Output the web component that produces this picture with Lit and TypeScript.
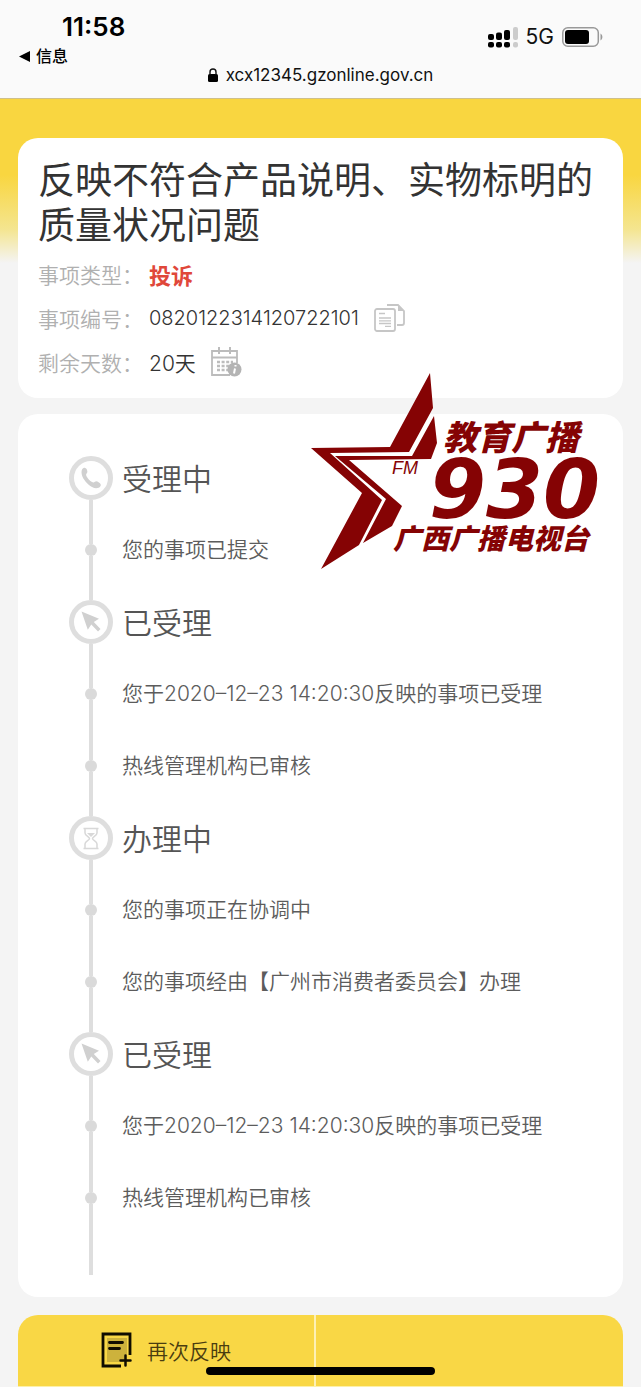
import { LitElement, html, svg, css } from "lit";
import { customElement, property } from "lit/decorators.js";

type Entry = { kind: "phone" | "pointer" | "hourglass" | "note"; text: string };

const ENTRIES: Entry[] = [
  { kind: "phone", text: "受理中" },
  { kind: "note", text: "您的事项已提交" },
  { kind: "pointer", text: "已受理" },
  { kind: "note", text: "您于2020–12–23 14:20:30反映的事项已受理" },
  { kind: "note", text: "热线管理机构已审核" },
  { kind: "hourglass", text: "办理中" },
  { kind: "note", text: "您的事项正在协调中" },
  { kind: "note", text: "您的事项经由【广州市消费者委员会】办理" },
  { kind: "pointer", text: "已受理" },
  { kind: "note", text: "您于2020–12–23 14:20:30反映的事项已受理" },
  { kind: "note", text: "热线管理机构已审核" },
];

const GLYPHS = {
  phone: svg`<path fill="#d0d0d0" d="M14.500 12c1.500-.8 3 .2 3.500 2 .5 1.600.6 2.500-.4 3.500-.8.8-.6 1.800.2 3.200 1.200 2.100 3 4.200 5.200 5.300 1.200.6 2 .5 2.900-.3 1-.9 2.300-.6 3.700.5 2.200 1.300 2.700 2.500 1.800 4-1.600 2.400-5.200 2.600-8.400.8-4.500-2.500-8.900-7.500-10.100-12-.8-3.100-.4-6.100 1.600-7z"/>`,
  pointer: svg`<path fill="#d0d0d0" d="M12.500 11.500 30 18.800l-5.200 3.300 6.700 6.900-2.500 2.500-6.700-6.900-3.500 5.200z"/>`,
  hourglass: svg`<g fill="none" stroke="#d8d8d8" stroke-width="1.500"><path d="M14.500 12.500h15M14.500 32.500h15M16 13v4c0 3 4.500 3.500 4.500 5.500s-4.500 2.500-4.500 5.500v4M28 13v4c0 3-4.500 3.500-4.500 5.500s4.500 2.500 4.500 5.500v4"/></g><path fill="#d8d8d8" d="M18 17h8l-4 4z"/>`,
};

@customElement("timeline-row")
class TimelineRow extends LitElement {
  @property({ attribute: false }) entry!: Entry;
  @property({ type: Boolean }) first = false;

  static styles = css`
    :host { display: flex; height: 72px; gap: 9px; align-items: center; }
    .rail { display: flex; flex-direction: column; align-items: center; width: 44px; height: 100%; flex: none; }
    .line { flex: 1; width: 4px; background: #dedede; }
    .clear { background: none; }
    .dot { width: 12px; height: 12px; border-radius: 50%; background: #dadada; }
    .badge { display: block; width: 44px; height: 44px; }
    .head { margin: 0; padding-top: 2px; font-size: 30px; line-height: 42px; font-weight: 350; color: #555; }
    .note { margin: 0; font-size: 21px; line-height: 30px; font-weight: 350; color: #5c5c5c; }
  `;

  render() {
    const { kind, text } = this.entry;
    return html`
      <div class="rail">
        <span class="line ${this.first ? "clear" : ""}"></span>
        ${kind === "note"
          ? html`<span class="dot"></span>`
          : html`<svg class="badge" viewBox="0 0 44 44" aria-hidden="true">
              <circle cx="22" cy="22" r="19.500" fill="#fff" stroke="#dedede" stroke-width="5" />
              ${GLYPHS[kind]}
            </svg>`}
        <span class="line"></span>
      </div>
      ${kind === "note" ? html`<p class="note">${text}</p>` : html`<h2 class="head">${text}</h2>`}
    `;
  }
}

@customElement("station-logo")
class StationLogo extends LitElement {
  static styles = css`
    :host { display: block; width: 322px; height: 198px; }
    svg { display: block; width: 100%; height: 100%; overflow: visible; }
    .shape, text { fill: #850304; }
    .cjk { font-family: "Noto Sans CJK SC", sans-serif; font-weight: 900; font-style: italic; }
    .upper { font-size: 34px; }
    .lower { font-size: 28px; }
    .fm { font-family: "Liberation Sans", sans-serif; font-style: italic; font-size: 18px; }
    .freq { font-family: "DejaVu Sans", sans-serif; font-weight: 700; font-style: italic; font-size: 82px; }
  `;

  render() {
    return html`
      <svg viewBox="0 0 322 198" role="img" aria-label="教育广播 FM930">
        <path class="shape" d="M121 0 124 35 100 79 21 80 73 127 50 172 12 196 53 120 2 75 81 74z" />
        <path class="shape" d="M125 43 128 70 122 86 40 87 93 133 83 153 54 170 77 126 26 83 103 83z" />
        <text class="fm" x="83" y="101">FM</text>
        <text class="cjk upper" x="134" y="77">教育广播</text>
        <text class="freq" x="120" y="145">930</text>
        <text class="cjk lower" x="84" y="176">广西广播电视台</text>
      </svg>
    `;
  }
}

@customElement("app-root")
class AppRoot extends LitElement {
  static styles = css`
    :host {
      display: block;
      min-height: 100vh;
      background: #f4f4f4;
      font-family: Inter, "Noto Sans CJK SC", sans-serif;
      color: #333;
    }
    .bar { background: #fafafa; border-bottom: 1px solid #cfc08a; padding-bottom: 14px; color: #111; }
    .status { display: flex; justify-content: space-between; align-items: flex-start; padding: 11px 38px 0 19px; }
    .time { font-size: 26px; line-height: 32px; font-weight: 600; padding-left: 43px; color: #000; }
    .back { display: flex; align-items: center; gap: 6px; margin-top: 3px; font-size: 16px; line-height: 20px; color: #000; text-decoration: none; font-weight: 500; }
    .signals { display: flex; align-items: center; gap: 8px; padding-top: 12px; font-size: 21px; line-height: 28px; }
    .address { display: flex; justify-content: center; align-items: center; gap: 8px; font-size: 17px; line-height: 18px; }
    svg { display: block; flex: none; }
    .page { padding: 39px 18px 0; background: linear-gradient(#f9d640 0, #f9d640 76px, #f4e58f 130px, #f4f4f4 164px); }
    .card { background: #fff; border-radius: 20px; }
    .summary { padding: 20px 20px 14px; }
    .title { margin: 0 0 4px; font-size: 37px; line-height: 45px; font-weight: 400; }
    .facts { margin: 0; }
    .fact { display: flex; align-items: center; gap: 6px; height: 44px; font-size: 21px; font-weight: 350; }
    .name { color: #b0b0b0; width: 105px; }
    .value { margin: 0; display: flex; align-items: center; gap: 15px; }
    .number { font-size: 20px; }
    .kind { color: #e0473a; font-weight: 700; font-size: 22px; }
    .icon-button { border: 0; padding: 0; background: none; }
    .progress { position: relative; margin-top: 16px; padding: 28px 51px 22px; }
    .list { list-style: none; margin: 0; padding: 0; }
    .tail { width: 4px; height: 41px; margin-left: 20px; background: #dedede; }
    .logo { position: absolute; top: -41px; right: -8px; }
    .actions { display: grid; grid-template-columns: 33fr 34fr; margin-top: 18px; border-radius: 20px 20px 0 0; background: #f9d745; border-bottom: 1px solid #fdf0a8; }
    .again { display: flex; align-items: center; justify-content: center; gap: 15px; height: 71px; padding: 0 0 2px; border: 0; border-right: 2px solid #fdf0b4; background: none; font: inherit; font-size: 21px; font-weight: 350; color: #4a3d10; }
    .home { position: fixed; bottom: 12px; left: 50%; width: 229px; height: 8px; margin-left: -115px; border-radius: 4px; background: #000; }
  `;

  render() {
    return html`
      <header class="bar">
        <div class="status">
          <div>
            <div class="time">11:58</div>
            <a class="back" href="#">
              <svg width="11" height="11" viewBox="0 0 11 11" aria-hidden="true"><path d="M0 5.500 11 0v11z" /></svg>
              信息
            </a>
          </div>
          <div class="signals">
            <svg width="30" height="21" viewBox="0 0 30 21" aria-hidden="true">
              <rect x="0" y="7" width="6" height="6" rx="2" /><rect x="8" y="5.500" width="6" height="7.500" rx="2" />
              <rect x="16" y="3" width="6" height="10" rx="2" /><rect x="25" y="0" width="5" height="13" rx="2" fill="#ccc" />
              <rect x="0" y="15" width="6" height="5.500" rx="2" /><rect x="8" y="15" width="6" height="5.500" rx="2" />
              <rect x="16" y="15" width="6" height="5.500" rx="2" /><rect x="25" y="15" width="5" height="5.500" rx="2" fill="#ccc" />
            </svg>
            <span>5G</span>
            <svg width="41" height="20" viewBox="0 0 41 20" aria-hidden="true">
              <rect x="0.800" y="0.800" width="35.500" height="18.400" rx="5" fill="none" stroke="#999" stroke-width="1.500" />
              <rect x="3" y="3" width="24" height="14" rx="3" /><path fill="#999" d="M38.500 6.500c2.500 1.500 2.500 5.500 0 7z" />
            </svg>
          </div>
        </div>
        <div class="address">
          <svg width="10" height="14" viewBox="0 0 10 14" aria-hidden="true">
            <rect x="0" y="6" width="10" height="8" rx="1.500" /><path d="M2 7V4a3 3 0 0 1 6 0v3" fill="none" stroke="#111" stroke-width="1.400" />
          </svg>
          <span>xcx12345.gzonline.gov.cn</span>
        </div>
      </header>

      <main class="page">
        <section class="card summary">
          <h1 class="title">反映不符合产品说明、实物标明的质量状况问题</h1>
          <dl class="facts">
            <div class="fact"><dt class="name">事项类型：</dt><dd class="value kind">投诉</dd></div>
            <div class="fact">
              <dt class="name">事项编号：</dt>
              <dd class="value">
                <span class="number">0820122314120722101</span>
                <button class="icon-button" aria-label="复制">
                  <svg width="31" height="28" viewBox="0 0 31 28" fill="none" stroke="#c6c6c6" stroke-width="1.800">
                    <rect x="1" y="5" width="20" height="22" rx="2" />
                    <path d="M13 1h11l6 6v12a2 2 0 0 1-2 2h-5" />
                    <path d="M24 1v6h6z" fill="#c6c6c6" stroke="none" />
                    <path d="M5 9.500h6M5 14h12M5 16.800h12M5 19.500h12M11 22.300h6" stroke-width="1.300" />
                  </svg>
                </button>
              </dd>
            </div>
            <div class="fact">
              <dt class="name">剩余天数：</dt>
              <dd class="value">
                <span>20天</span>
                <svg width="31" height="30" viewBox="0 0 31 30" fill="none" stroke="#bcbcbc" aria-hidden="true">
                  <path d="M26 16V4H1v24h18M1 10.500h25" stroke-width="1.800" />
                  <path d="M8 0v7M19 0v7" stroke-width="2" />
                  <path d="M6 15h16M6 19h12M6 23h12" stroke-width="2.500" stroke-dasharray="3 1.600" />
                  <circle cx="23.500" cy="22.500" r="7" fill="#b4b4b4" stroke="none" />
                  <path d="M24.500 18v1.500M24 21.500l-1 5" stroke="#fff" stroke-width="2" />
                </svg>
              </dd>
            </div>
          </dl>
        </section>

        <section class="card progress">
          <ol class="list">
            ${ENTRIES.map((e, i) => html`<li><timeline-row .entry=${e} ?first=${i === 0}></timeline-row></li>`)}
          </ol>
          <div class="tail"></div>
          <station-logo class="logo"></station-logo>
        </section>

        <nav class="actions">
          <button class="again">
            <svg width="31" height="36" viewBox="0 0 31 36" fill="none" stroke="#110d00" aria-hidden="true">
              <path d="M6 6h20v17l-4 7H6z" fill="#cdb23c" stroke="none" />
              <path d="M29 23V2H2v32h18" stroke-width="2.800" />
              <path d="M8.500 10.500h13M8.500 16.500h10" stroke-width="2.800" stroke-linecap="round" />
              <path d="M24.500 23.500v10M19.500 28.500h10" stroke-width="2.500" stroke-linecap="round" />
            </svg>
            再次反映
          </button>
        </nav>
      </main>
      <div class="home"></div>
    `;
  }
}
